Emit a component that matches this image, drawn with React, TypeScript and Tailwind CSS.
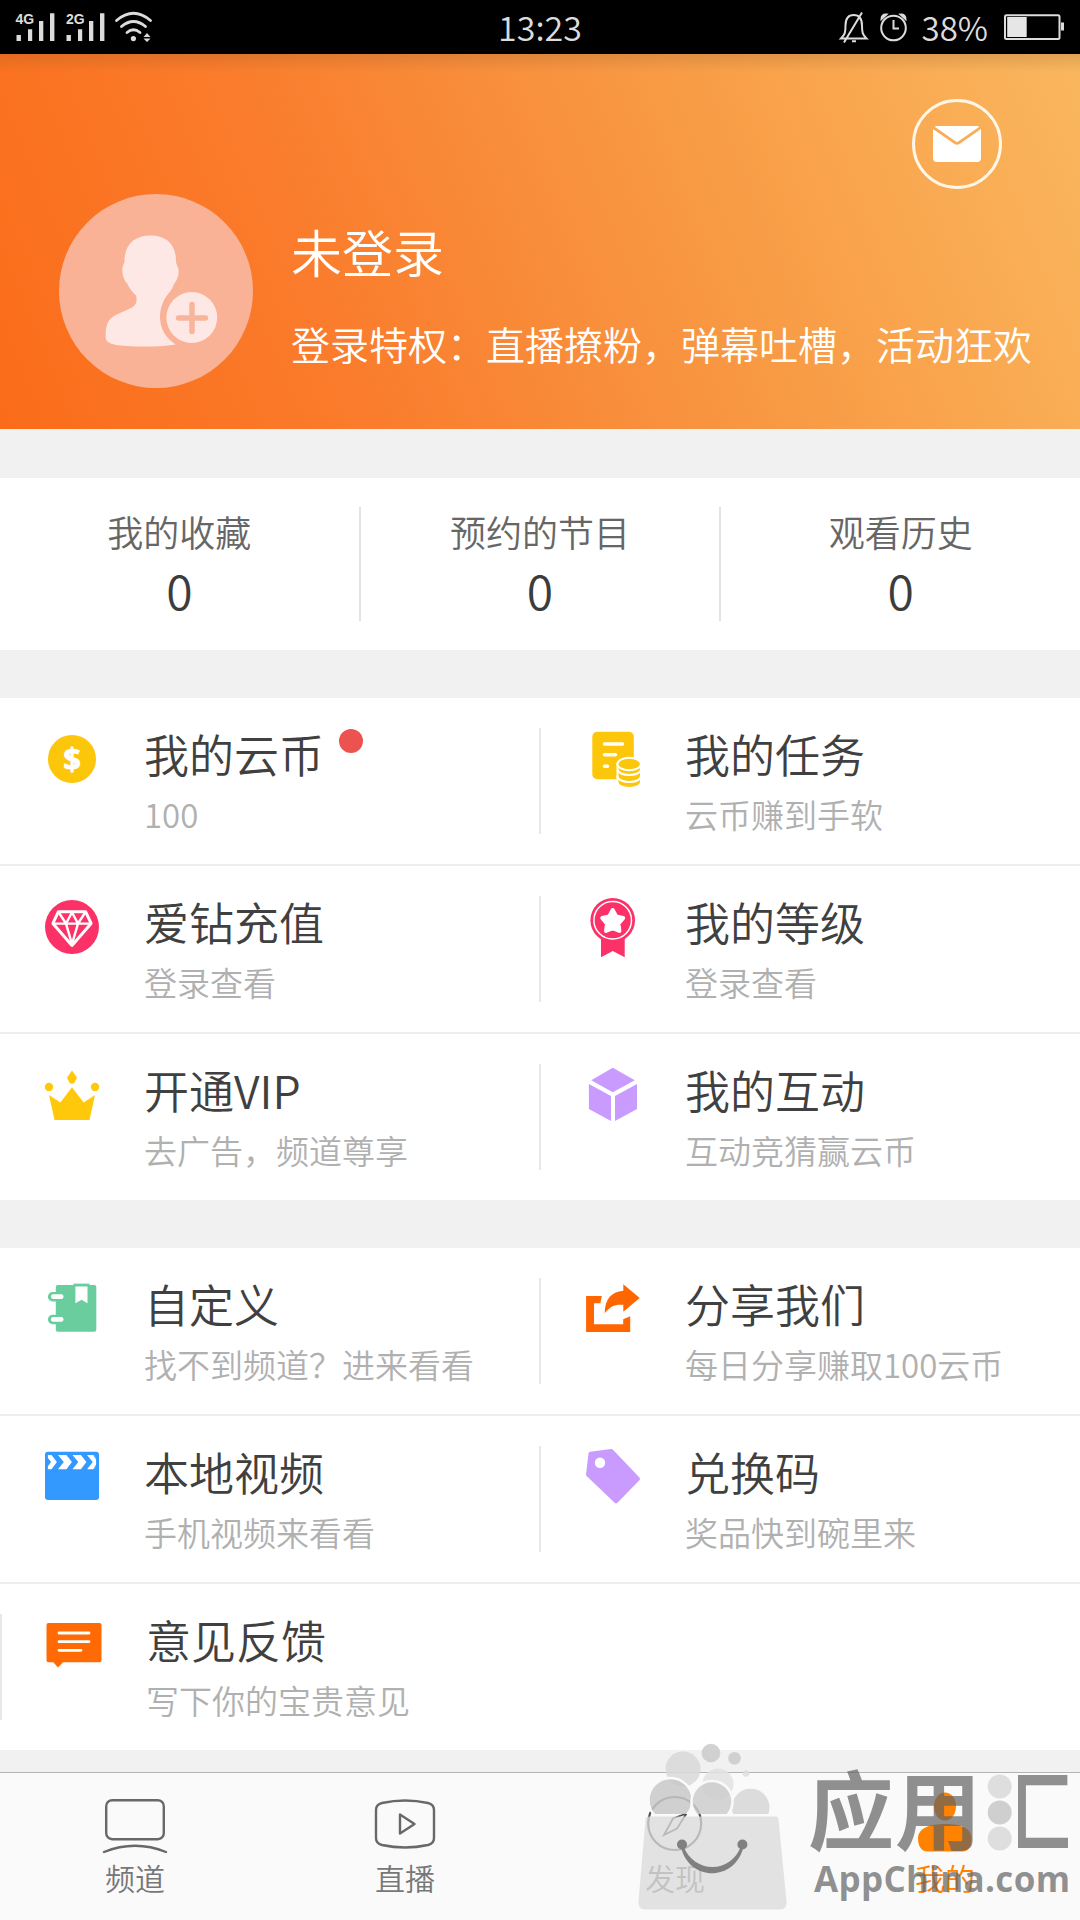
import type { ReactNode } from "react";

interface MenuItem {
  title: string;
  desc: string;
  icon: ReactNode;
  dot?: boolean;
}

interface IconProps {
  children: ReactNode;
}

const Icon: React.FC<IconProps> = ({ children }) => (
  <svg className="h-16 w-16 shrink-0" viewBox="0 0 64 64" fill="none">
    {children}
  </svg>
);

const CoinIcon = () => (
  <Icon>
    <circle cx="32" cy="32" r="24" fill="#fcc60b" />
    <text
      x="32"
      y="43"
      fontSize="31"
      fontWeight="700"
      textAnchor="middle"
      fill="#fff"
      className="font-['Open_Sans',sans-serif]"
      stroke="#fff"
      strokeWidth="0.8"
    >
      $
    </text>
  </Icon>
);

const TaskIcon = () => (
  <Icon>
    <rect x="12.3" y="4.7" width="41.5" height="47.6" rx="5" fill="#fcc60b" />
    <g stroke="#fff" strokeWidth="3.4" strokeLinecap="round">
      <path d="M24.5 17h18M24.5 27.7h11M24.5 39.3h3" />
    </g>
    <g fill="#fcc60b" stroke="#fff" strokeWidth="2">
      <path d="M37.5 50v5c0 8 23.5 8 23.5 0v-5z" />
      <path d="M37.5 44v5c0 8 23.5 8 23.5 0v-5z" />
      <path d="M37.5 37v5c0 8 23.5 8 23.5 0v-5z" />
      <ellipse cx="49.2" cy="37" rx="11.7" ry="6.3" />
    </g>
  </Icon>
);

const DiamondIcon = () => (
  <Icon>
    <circle cx="32" cy="32" r="27" fill="#fb3168" />
    <g stroke="#fff" strokeWidth="2.4" strokeLinejoin="round">
      <path d="M18.3 16.8h27.4l5.4 11.6L32 50.4 12.9 28.4z" strokeWidth="3" />
      <path d="M13.5 28.6h37M18.8 17.5l7.2 11L32 17.5l6 11 7.2-11M26 28.6L32 49l6-20.4" />
    </g>
  </Icon>
);

const MedalIcon = () => (
  <Icon>
    <path d="M21 42h23.7v20.3L32.8 56 21 62.3z" fill="#fb3168" />
    <circle cx="32.7" cy="25.3" r="22.3" fill="#fb3168" />
    <circle cx="32.7" cy="25.3" r="18.8" stroke="#fff" strokeWidth="1.5" />
    <path
      d="M32.7 15l3.500 6.500 7 1.500-4.800 5.600 1 7.400-6.700-2.800-6.700 2.800 1-7.400-4.800-5.600 7-1.500z"
      fill="#fff"
      stroke="#fff"
      strokeWidth="4"
      strokeLinejoin="round"
    />
  </Icon>
);

const CrownIcon = () => (
  <Icon>
    <g fill="#ffc80a">
      <path d="M32 7.5l5 7.2-2.7 5.2q-2.3 1.5-4.6 0L27 14.7z" />
      <circle cx="9" cy="24" r="4.2" />
      <circle cx="55" cy="24" r="4.2" />
      <path d="M9 32l11.3 7.5L32 24.3l11.7 15.2L55 32l-5.5 25h-35z" />
    </g>
  </Icon>
);

const CubeIcon = () => (
  <Icon>
    <g fill="#c99bff">
      <path d="M32.8 4.7l22 12.6-22 12-21.6-12z" />
      <path d="M8.9 21L31 33v25L8.9 46z" />
      <path d="M57 21L35 33v25l22-12z" />
    </g>
  </Icon>
);

const NotebookIcon = () => (
  <Icon>
    <rect x="15.8" y="8" width="40.5" height="46.8" rx="2" fill="#6acd9e" />
    <rect x="7.9" y="15" width="18" height="9.4" rx="4.7" fill="#6acd9e" />
    <rect x="7.9" y="37.8" width="18" height="9.4" rx="4.7" fill="#6acd9e" />
    <rect x="11" y="17.2" width="12.5" height="4.8" rx="2.2" fill="#fff" />
    <rect x="11" y="40" width="12.5" height="4.8" rx="2.2" fill="#fff" />
    <path d="M33.5 7.6h16" stroke="#6acd9e" strokeWidth="2" />
    <path d="M35.4 9.5h12.1v16.8l-6-3.6-6.1 3.6z" fill="#fff" />
  </Icon>
);

const ShareIcon = () => (
  <Icon>
    <g fill="#ff6600">
      <path d="M6.1 19h15.7l-1.4 7.3H14v21h29.2v-5l7-3V55H6.1z" />
      <path d="M24.7 36.3C25 22 31 15 43.3 13.8V7.3L59.7 21 43.3 34.7v-6.9c-8.5-.6-13.5 1.7-18.6 8.5z" />
    </g>
  </Icon>
);

const VideoIcon = () => (
  <Icon>
    <rect x="5" y="6.7" width="54" height="48.3" rx="3" fill="#3399fe" />
    <g fill="#fff">
      <path d="M7.9 10h3.6l5.4 7.1-5.4 7.2H7.9v-3l3.1-4.2-3.1-4z" />
      <path d="M18 10h8.400l5.500 7.1-5.500 7.2H18l5.800-7.2z" />
      <path d="M32.500 10h8.400l5.500 7.1-5.500 7.2h-8.400l5.800-7.2z" />
      <path d="M47 10h7l2.100 2.700v8.900L54 24.300h-7l5.800-7.200z" />
    </g>
    <path d="M53.500 9.500l4.500 7.600-4.500 7.600" stroke="#3399fe" strokeWidth="1" />
  </Icon>
);

const TagIcon = () => (
  <Icon>
    <path
      d="M10.5 8.8L31.3 6l26.7 27.8L36 56.3 8 29.5z"
      fill="#c99bff"
      stroke="#c99bff"
      strokeWidth="4"
      strokeLinejoin="round"
    />
    <circle cx="20" cy="17.7" r="5.2" fill="#fff" />
  </Icon>
);

const FeedbackIcon = () => (
  <Icon>
    <path
      d="M7.500 10h51q2 0 2 2v35.300q0 2-2 2H22l-5 5.200-4.700-5.200H7.500q-2 0-2-2V12q0-2 2-2z"
      fill="#ff6a05"
    />
    <path
      d="M18 20h30M18 28.700h30M18 37.300h22"
      stroke="#fff"
      strokeWidth="2.8"
      strokeLinecap="round"
    />
  </Icon>
);

const stats = [
  { label: "我的收藏", count: 0 },
  { label: "预约的节目", count: 0 },
  { label: "观看历史", count: 0 },
];

const accountItems: MenuItem[] = [
  { title: "我的云币", desc: "100", icon: <CoinIcon />, dot: true },
  { title: "我的任务", desc: "云币赚到手软", icon: <TaskIcon /> },
  { title: "爱钻充值", desc: "登录查看", icon: <DiamondIcon /> },
  { title: "我的等级", desc: "登录查看", icon: <MedalIcon /> },
  { title: "开通VIP", desc: "去广告，频道尊享", icon: <CrownIcon /> },
  { title: "我的互动", desc: "互动竞猜赢云币", icon: <CubeIcon /> },
];

const toolItems: MenuItem[] = [
  { title: "自定义", desc: "找不到频道？进来看看", icon: <NotebookIcon /> },
  { title: "分享我们", desc: "每日分享赚取100云币", icon: <ShareIcon /> },
  { title: "本地视频", desc: "手机视频来看看", icon: <VideoIcon /> },
  { title: "兑换码", desc: "奖品快到碗里来", icon: <TagIcon /> },
  { title: "意见反馈", desc: "写下你的宝贵意见", icon: <FeedbackIcon /> },
];

const StatusBar = () => (
  <div className="flex h-[54px] items-center justify-between bg-black text-[#dcdcdc]">
    <svg className="h-[54px] w-[400px]" viewBox="0 0 400 54" fill="#dcdcdc">
      <g className="font-['Liberation_Sans',sans-serif]" fontSize="14" fontWeight="700">
        <text x="15.500" y="24">4G</text>
        <text x="66" y="24">2G</text>
      </g>
      <path d="M16.5 35h4.4v6h-4.4zM28 29.3h4.2V41H28zM39 21h4.3v20H39zM50 13.3h4.4V41H50z" />
      <path d="M66.5 35h4.4v6h-4.4zM78 29.3h4.2V41H78zM89 21h4.3v20H89zM100 13.3h4.4V41H100z" />
      <g fill="none" stroke="#dcdcdc" strokeWidth="2.8" strokeLinecap="round">
        <path d="M116.5 20.5Q133.500 6 150.500 20.500M121.500 26.500Q133.500 16.500 145.500 26.500M127 32.500Q133.500 27 140 32.500" />
      </g>
      <circle cx="133.4" cy="38.6" r="2.6" />
      <path d="M147 33l3.500 4h-7zM147 42l3.500-3.500h-7z" />
    </svg>
    <span className="text-[34px] leading-[54px] font-[350]">13:23</span>
    <div className="flex w-[400px] items-center justify-end pr-[15px]">
      <svg className="mr-[12px] h-[54px] w-[72px]" viewBox="0 0 72 54" fill="none" stroke="#dcdcdc" strokeWidth="2">
        <path d="M3 38.500h25.500c-4-4-4.500-6-4.500-13 0-7-3-10.500-8.300-10.500S7.500 18.500 7.500 25.500c0 7-.5 9-4.500 13zM24 12.500L6 42.500M14 41.200h4" />
        <circle cx="55.500" cy="28" r="12.300" />
        <path d="M55.500 20v8.500h5.500" />
        <path d="M43.500 19c0-3 2-5 5-4.500zM67.500 19c0-3-2-5-5-4.500z" fill="#dcdcdc" />
      </svg>
      <span className="text-[33px] leading-[54px] font-[350]">38%</span>
      <svg className="ml-[16px] h-[54px] w-[61px]" viewBox="0 0 61 54">
        <rect x="1" y="15.200" width="54.500" height="23.800" rx="1.500" fill="none" stroke="#dcdcdc" strokeWidth="2" />
        <rect x="3.200" y="17" width="19.500" height="20" fill="#e6e6e6" />
        <path d="M57 22.500h3v8h-3z" fill="#dcdcdc" />
      </svg>
    </div>
  </div>
);

const ProfileHeader = () => (
  <div className="h-[375px] bg-[linear-gradient(to_bottom,rgba(120,80,40,0.2),transparent_18px),linear-gradient(68deg,#fa6c19_0%,#fa7c2c_30%,#f88f3c_52%,#f9a34c_75%,#fab75e_100%)] text-white">
    <div className="flex justify-end pt-[45px] pr-[78px]">
      <div className="flex h-[90px] w-[90px] items-center justify-center rounded-full border-[3px] border-[#fff6e6]">
        <svg className="h-9 w-12" viewBox="0 0 48 36" fill="#fff">
          <path d="M3.500 0h41q1.500 0 1.500 1L25.500 15.300q-1.500 1-3 0L2 1Q2 0 3.500 0z" />
          <path d="M0 3l21.500 15q2.500 1.600 5 0L48 3v29q0 4-4 4H4q-4 0-4-4z" />
        </svg>
      </div>
    </div>
    <div className="mt-[5px] flex pl-[59px]">
      <div className="h-[194px] w-[194px] rounded-full bg-[#f9b296]">
        <svg className="h-full w-full" viewBox="0 0 194 194">
          <path
            d="M91.500 41.500C76 41.500 65.500 50 65.500 67c0 3-2.500 5-2.200 10 .4 6 2 9 5.200 13 2 5 5 8 8.500 11.500 1.500 5 .5 9-4 12-7 4-14 5.500-19.500 9.500-7 5-7 15-6.800 21 0 4 6 6.500 12 7.200 18 2 40 2 58-.8A33 33 0 01101 124c0-10 3-18 8.500-24.500 2.500-3 4-5 5.500-9.500 3-3.500 4.600-8 4.700-13 0-4-2.700-6-2.700-10 0-17-10-25.500-25.500-25.500z"
            fill="#fee8e6"
          />
          <circle cx="132.800" cy="123.500" r="25.400" fill="#fee8e6" />
          <path d="M119.500 124h27M133 110.500v27" stroke="#f9b49c" strokeWidth="5.500" strokeLinecap="round" />
        </svg>
      </div>
      <div className="flex flex-col pt-[25px] pl-[38px] font-[350] whitespace-nowrap">
        <h1 className="text-[51px] leading-[64px]">未登录</h1>
        <p className="mt-[36px] text-[39px] leading-[48px]">
          登录特权：直播撩粉，弹幕吐槽，活动狂欢
        </p>
      </div>
    </div>
  </div>
);

const Stats = () => (
  <div className="mt-[49px] flex h-[172px] items-center bg-white">
    {stats.map(({ label, count }, i) => (
      <div
        key={label}
        className={`flex h-[114px] flex-1 flex-col items-center ${
          i > 0 ? "border-l-2 border-[#e4e4e4]" : ""
        }`}
      >
        <span className="-mt-[2px] text-[36px] leading-[52px] font-[350] text-[#666]">
          {label}
        </span>
        <span className="mt-[2px] text-[48px] leading-[60px] font-[350] text-[#3c3c3c]">
          {count}
        </span>
      </div>
    ))}
  </div>
);

interface MenuGridProps {
  items: MenuItem[];
}

const MenuGrid: React.FC<MenuGridProps> = ({ items }) => (
  <div className="mt-[48px] grid grid-cols-[539px_541px] bg-white">
    {items.map(({ title, desc, icon, dot }, i) => {
      const lastRow = i >= items.length - (items.length % 2 || 2);
      // a trailing single item keeps its divider as well
      const divider = i % 2 === 1 || (items.length % 2 === 1 && i === items.length - 1);
      return (
        <div
          key={title}
          className={`flex ${
            lastRow ? "h-[166px]" : "h-[168px] border-b-2 border-[#eeeeee]"
          }`}
        >
          {divider && (
            <div className="mt-[30px] h-[106px] w-[2px] bg-[#e8e8e8]" />
          )}
          <div className={divider ? "pt-[29px] pr-[41px] pl-[39px]" : "px-[40px] pt-[29px]"}>
            {icon}
          </div>
          <div className="pt-[28px] font-[350] whitespace-nowrap">
            <div className="flex">
              <span className="text-[45px] leading-[56px] text-[#404040]">
                {title}
              </span>
              {dot && (
                <span className="mt-[3px] ml-[15px] h-6 w-6 rounded-full bg-[#ec5350]" />
              )}
            </div>
            <p className="mt-[12px] text-[33px] leading-[40px] text-[#b0b0b0]">
              {desc}
            </p>
          </div>
        </div>
      );
    })}
    {items.length % 2 === 1 && <div />}
  </div>
);

const tabs = [
  {
    label: "频道",
    icon: (
      <g stroke="#686868" strokeWidth="2.400">
        <rect x="3.200" y="4.200" width="57.600" height="39" rx="6" />
        <path d="M1 56Q32 43.500 63 56" strokeLinecap="round" />
      </g>
    ),
  },
  {
    label: "直播",
    icon: (
      <g stroke="#686868" strokeWidth="2.400" strokeLinejoin="round">
        <path d="M9 7q23-5 46 0 6 1.500 6 7v28q0 5.500-6 7-23 5-46 0-6-1.500-6-7V14q0-5.500 6-7z" />
        <path d="M27 18.500v19l14.500-9.500z" />
      </g>
    ),
  },
  {
    label: "发现",
    icon: (
      <g stroke="#505050" strokeWidth="2.200">
        <circle cx="31.700" cy="27.500" r="26.500" />
        <path d="M43.500 17.500L30 22.500 21 39l13-6.500z" strokeWidth="1.800" />
      </g>
    ),
  },
  {
    label: "我的",
    active: true,
    icon: (
      <g fill="#ff8200">
        <ellipse cx="32" cy="10.500" rx="11" ry="14" />
        <path d="M32 28c15 0 26.500 4 26.500 14.500C58.500 52 54 55.500 50 55.500H14C10 55.500 5 52 5 42.500 5 32 17 28 32 28z" />
      </g>
    ),
  },
];

const TabBar = () => (
  <div className="mt-[22px] flex h-[148px] border-t border-[#b4b4b4] bg-[#fafafa]">
    {tabs.map(({ label, icon, active }) => (
      <div key={label} className="flex flex-1 flex-col items-center pt-[23px]">
        <svg className="h-[60px] w-16 overflow-visible" viewBox="0 0 64 60" fill="none">
          {icon}
        </svg>
        <span
          className={`mt-[1px] text-[30px] leading-[40px] font-[350] ${
            active ? "text-[#ff8200]" : "text-[#777]"
          }`}
        >
          {label}
        </span>
      </div>
    ))}
  </div>
);

const Watermark = () => (
  <svg
    className="pointer-events-none absolute right-0 bottom-0 h-[190px] w-[540px]"
    viewBox="0 0 540 190"
  >
    <defs>
      <clipPath id="balloons">
        <path d="M0 0h540v84H0z" />
      </clipPath>
      <clipPath id="frame">
        <path d="M478 30h50v100h-50z" />
      </clipPath>
    </defs>
    <g clipPath="url(#balloons)" fillOpacity="0.85">
      <circle cx="143" cy="39" r="17.500" fill="#d8d8d8" />
      <circle cx="171" cy="23" r="9.300" fill="#cacaca" />
      <circle cx="194.500" cy="28.300" r="6.300" fill="#cacaca" />
      <circle cx="206" cy="43.500" r="3.300" fill="#dedede" />
      <circle cx="178" cy="54" r="15.500" fill="#e2e2e2" />
      <g stroke="#fafafa" strokeWidth="2.500">
        <circle cx="130.500" cy="70" r="22" fill="#c8c8c8" />
        <circle cx="210.700" cy="77.500" r="20" fill="#d6d6d6" />
        <circle cx="172" cy="71.500" r="20.500" fill="#cccccc" />
      </g>
    </g>
    <path
      d="M108 86.500h128q2 0 2.500 3l8 82q.5 8-7 8H106q-8 0-7.500-8l7-82q.5-3 2.500-3z"
      fill="#dadada"
      fillOpacity="0.76"
    />
    <g fill="#808080">
      <circle cx="142" cy="114.500" r="5" />
      <circle cx="202.400" cy="114.500" r="5" />
      <path d="M141 117c8 35 54 35 62.400 0l-2.400-1c-10 28-47 28-57.600 0z" />
    </g>
    <g
      className="font-['Noto_Sans_CJK_SC',sans-serif]"
      fill="#616161"
      fillOpacity="0.7"
      fontWeight="700"
      fontSize="86"
    >
      <text x="268" y="114">应</text>
      <text x="355" y="114">用</text>
      <text x="446" y="114" clipPath="url(#frame)">汇</text>
    </g>
    <circle cx="459.700" cy="56.500" r="12" fill="#dedede" />
    <circle cx="459.700" cy="82.500" r="12" fill="#cfcfcf" />
    <circle cx="459.700" cy="108.500" r="12" fill="#dedede" />
    <text
      x="274"
      y="162"
      textLength="256"
      className="font-['Open_Sans',sans-serif]"
      fontSize="35"
      fontWeight="700"
      fill="#616161"
      fillOpacity="0.7"
    >
      AppChina.com
    </text>
  </svg>
);

const App = () => {
  return (
    <div className="relative h-[1920px] w-[1080px] overflow-hidden bg-[#f1f1f1] font-['Noto_Sans_CJK_SC',sans-serif]">
      <StatusBar />
      <ProfileHeader />
      <Stats />
      <MenuGrid items={accountItems} />
      <MenuGrid items={toolItems} />
      <TabBar />
      <Watermark />
    </div>
  );
};

export default App;
